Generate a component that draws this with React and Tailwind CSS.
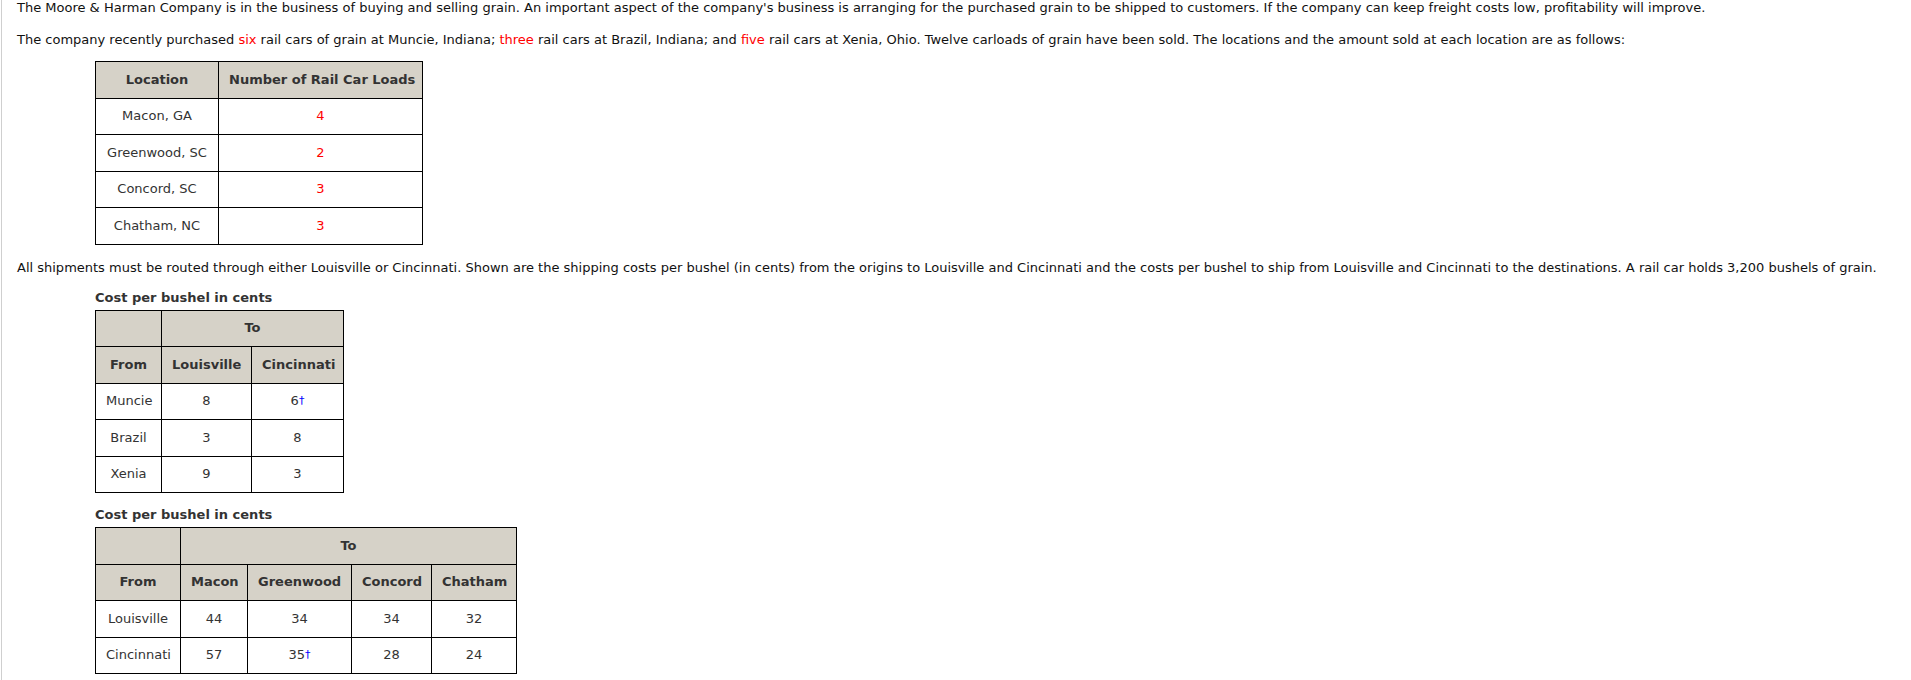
import React from 'react';

const dagger = (
  <span className="relative -top-[1px] text-[11px] text-[#0000ff]">†</span>
);

const railLoads = [
  { place: 'Macon, GA', loads: 4 },
  { place: 'Greenwood, SC', loads: 2 },
  { place: 'Concord, SC', loads: 3 },
  { place: 'Chatham, NC', loads: 3 },
];

const toHubs = [
  { from: 'Muncie', cells: ['8', <>6{dagger}</>] },
  { from: 'Brazil', cells: ['3', '8'] },
  { from: 'Xenia', cells: ['9', '3'] },
];

const toDestinations = [
  { from: 'Louisville', cells: ['44', '34', '34', '32'] },
  { from: 'Cincinnati', cells: ['57', <>35{dagger}</>, '28', '24'] },
];

const th = 'border border-black bg-[#d6d2c8] px-[10px] h-[36.5px] p-0 font-bold text-center text-[#333] whitespace-nowrap';
const td = 'border border-black px-[10px] h-[36.5px] p-0 text-center text-[#333]';

function Red({ children }) {
  return <span className="text-[#ff0000]">{children}</span>;
}

function Caption({ children }) {
  return <p className="ml-[78px] font-bold text-[#333]">{children}</p>;
}

function App() {
  return (
    <div className="min-h-screen bg-white pl-[1px] font-['Verdana','DejaVu_Sans',sans-serif] text-[13px] leading-4 text-[#111]">
      <div className="border-l border-[#cfcfcf] pl-[15px] pb-2 min-h-[680px]">
        <p>
          The Moore &amp; Harman Company is in the business of buying and selling grain. An important aspect of the company's business is arranging for the purchased grain to be shipped to customers. If the company can keep freight costs low, profitability will improve.
        </p>
        <p className="mt-4">
          The company recently purchased <Red>six</Red> rail cars of grain at Muncie, Indiana; <Red>three</Red> rail cars at Brazil, Indiana; and <Red>five</Red> rail cars at Xenia, Ohio. Twelve carloads of grain have been sold. The locations and the amount sold at each location are as follows:
        </p>

        <table className="ml-[78px] mt-[13px] border-collapse table-fixed w-[327px]">
          <colgroup>
            <col className="w-[123px]" />
            <col className="w-[204px]" />
          </colgroup>
          <thead>
            <tr>
              <th className={th}>Location</th>
              <th className={`${th} px-[2px]`}>Number of Rail Car Loads</th>
            </tr>
          </thead>
          <tbody>
            {railLoads.map((r) => (
              <tr key={r.place}>
                <td className={td}>{r.place}</td>
                <td className={td}>
                  <Red>{r.loads}</Red>
                </td>
              </tr>
            ))}
          </tbody>
        </table>

        <p className="mt-[15px]">
          All shipments must be routed through either Louisville or Cincinnati. Shown are the shipping costs per bushel (in cents) from the origins to Louisville and Cincinnati and the costs per bushel to ship from Louisville and Cincinnati to the destinations. A rail car holds 3,200 bushels of grain.
        </p>

        <div className="mt-[14px]">
          <Caption>Cost per bushel in cents</Caption>
          <table className="ml-[78px] mt-[4px] border-collapse table-fixed w-[248px]">
            <colgroup>
              <col className="w-[66px]" />
              <col className="w-[90px]" />
              <col className="w-[92px]" />
            </colgroup>
            <thead>
              <tr>
                <th className={th}></th>
                <th className={th} colSpan={2}>To</th>
              </tr>
              <tr>
                <th className={th}>From</th>
                <th className={th}>Louisville</th>
                <th className={th}>Cincinnati</th>
              </tr>
            </thead>
            <tbody>
              {toHubs.map((r) => (
                <tr key={r.from}>
                  <td className={td}>{r.from}</td>
                  {r.cells.map((c, i) => (
                    <td key={i} className={td}>{c}</td>
                  ))}
                </tr>
              ))}
            </tbody>
          </table>
        </div>

        <div className="mt-[14px]">
          <Caption>Cost per bushel in cents</Caption>
          <table className="ml-[78px] mt-[4px] border-collapse table-fixed w-[421px]">
            <colgroup>
              <col className="w-[85px]" />
              <col className="w-[67px]" />
              <col className="w-[104px]" />
              <col className="w-[80px]" />
              <col className="w-[85px]" />
            </colgroup>
            <thead>
              <tr>
                <th className={th}></th>
                <th className={th} colSpan={4}>To</th>
              </tr>
              <tr>
                <th className={th}>From</th>
                <th className={th}>Macon</th>
                <th className={th}>Greenwood</th>
                <th className={th}>Concord</th>
                <th className={th}>Chatham</th>
              </tr>
            </thead>
            <tbody>
              {toDestinations.map((r) => (
                <tr key={r.from}>
                  <td className={td}>{r.from}</td>
                  {r.cells.map((c, i) => (
                    <td key={i} className={td}>{c}</td>
                  ))}
                </tr>
              ))}
            </tbody>
          </table>
        </div>
      </div>
    </div>
  );
}

export default App;
